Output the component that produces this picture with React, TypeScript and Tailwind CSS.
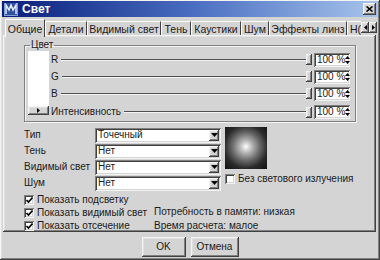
import { ReactNode } from 'react';

const raised =
  'shadow-[inset_-1px_-1px_#404040,inset_1px_1px_#f4f4f4,inset_-2px_-2px_#808080,inset_2px_2px_#e0e0e0]';
const sunken =
  'shadow-[inset_1px_1px_#808080,inset_-1px_-1px_#f4f4f4,inset_2px_2px_#404040,inset_-2px_-2px_#d4d4d4]';

const DownArrow = () => (
  <svg width="7" height="4" viewBox="0 0 7 4" className="shrink-0">
    <path d="M0 0h7L3.5 4z" fill="#000" />
  </svg>
);

const Combo = ({ value }: { value: string }) => (
  <div className={`flex h-[15px] w-[126px] items-center bg-white pl-[3px] pr-[2px] ${sunken}`}>
    <span className="flex-1 leading-none">{value}</span>
    <div className={`flex h-[11px] w-[10px] shrink-0 items-center justify-center bg-[#d4d4d4] ${raised}`}>
      <DownArrow />
    </div>
  </div>
);

const Spin = () => (
  <div className={`flex h-[14px] w-[36px] shrink-0 items-center bg-white pl-[3px] pr-[2px] ${sunken}`}>
    <span className="flex-1 leading-none">100 %</span>
    <svg width="5" height="10" viewBox="0 0 5 10" className="shrink-0">
      <path d="M0 4L2.5 1L5 4z M0 6h5L2.5 9z" fill="#000" />
    </svg>
  </div>
);

const SliderRow = ({ label, tall }: { label: string; tall?: boolean }) => (
  <div className={`flex items-center ${tall ? 'mt-[1px] h-[18px]' : 'h-[17px]'}`}>
    <span className="leading-none">{label}</span>
    <div className="ml-[3px] h-[2px] flex-1 border-t border-b border-t-[#505050] border-b-[#f4f4f4]" />
    <div className={`h-[11px] w-[6px] shrink-0 bg-[#d4d4d4] ${raised}`} />
    <div className="ml-[2px] mr-[2px]">
      <Spin />
    </div>
  </div>
);

const Check = ({ checked, children }: { checked: boolean; children: ReactNode }) => (
  <div className="flex h-[10px] items-center gap-[3px]">
    <div className={`flex h-[10px] w-[10px] shrink-0 items-center justify-center bg-white ${sunken}`}>
      {checked && (
        <svg width="7" height="7" viewBox="0 0 7 7">
          <path d="M0.5 3l2 2 4-4.5" stroke="#000" strokeWidth="1.6" fill="none" />
        </svg>
      )}
    </div>
    <span className="leading-none">{children}</span>
  </div>
);

const tabs = [
  { name: 'Детали', w: 'w-[42px]' },
  { name: 'Видимый свет', w: 'w-[74px]' },
  { name: 'Тень', w: 'w-[30px]' },
  { name: 'Каустики', w: 'w-[50px]' },
  { name: 'Шум', w: 'w-[28px]' },
  { name: 'Эффекты линз', w: 'w-[78px]' },
];

export default function App() {
  return (
    <div
      className={`flex h-[260px] w-[380px] flex-col overflow-hidden whitespace-nowrap bg-[#d4d4d4] px-[2px] pt-[1px] text-[10px] text-[#1a1a1a] ${raised}`}
      style={{ fontFamily: '"Liberation Sans", Arial, sans-serif' }}
    >
      {/* title bar */}
      <div className="flex h-[16px] shrink-0 items-center bg-gradient-to-r from-[#0c1c7a] via-[#4a6cc0] to-[#a8c4ea] px-[2px]">
        <div className="flex h-[13px] w-[14px] items-center justify-center bg-[#7fa0d0]">
          <svg width="12" height="12" viewBox="0 0 12 12">
            <rect x="0" y="0" width="12" height="12" fill="#3050a0" />
            <path d="M1 11V2l3 5 2-5 2 5 3-5v9" stroke="#e0e8ff" strokeWidth="1.5" fill="none" />
          </svg>
        </div>
        <span className="ml-[4px] flex-1 text-[12px] font-bold leading-none text-white">Свет</span>
        <div className={`flex h-[12px] w-[13px] items-center justify-center bg-[#d4d4d4] ${raised}`}>
          <svg width="7" height="6" viewBox="0 0 7 6">
            <path d="M0.5 0.5l6 5M6.5 0.5l-6 5" stroke="#000" strokeWidth="1.6" />
          </svg>
        </div>
      </div>

      {/* tabs */}
      <div className="flex h-[18px] shrink-0 items-end pl-[3px] pr-[1px] text-[10.5px]">
        <div className="relative z-10 mb-[-2px] flex h-[18px] w-[40px] shrink-0 items-start justify-center border-l border-t border-r border-white border-r-[#404040] bg-[#d4d4d4] pt-[4px] leading-none">
          Общие
        </div>
        {tabs.map((t) => (
          <div
            key={t.name}
            className={`flex h-[14px] shrink-0 ${t.w} items-center justify-center border-l border-t border-r border-white border-r-[#404040] pt-[1px] leading-none`}
          >
            {t.name}
          </div>
        ))}
        <div className="flex h-[14px] w-[14px] shrink-0 items-center overflow-hidden border-l border-t border-white pl-[2px] pt-[1px] leading-none">
          Н(
        </div>
        <div className="mb-[2px] flex">
          <div className={`flex h-[11px] w-[8px] items-center justify-center bg-[#d4d4d4] ${raised}`}>
            <svg width="3" height="5" viewBox="0 0 3 5"><path d="M3 0v5L0 2.5z" fill="#000" /></svg>
          </div>
          <div className={`flex h-[11px] w-[8px] items-center justify-center bg-[#d4d4d4] ${raised}`}>
            <svg width="3" height="5" viewBox="0 0 3 5"><path d="M0 0v5l3-2.5z" fill="#000" /></svg>
          </div>
        </div>
      </div>

      {/* panel */}
      <div className={`ml-[1px] mr-[2px] flex h-[197px] shrink-0 flex-col overflow-hidden pl-[21px] pr-[20px] pt-[5px] ${raised}`}>
        <fieldset className="h-[82px] border border-[#808080] px-[3px] shadow-[1px_1px_#f4f4f4,inset_1px_1px_#f4f4f4]">
          <legend className="ml-[2px] px-[1px] leading-none">Цвет</legend>
          <div className="mt-[1px] flex">
            <div className="flex w-[21px] flex-col">
              <div className="h-[55px] bg-white" />
              <div className={`flex h-[9px] items-center justify-center bg-[#d4d4d4] ${raised}`}>
                <svg width="3" height="5" viewBox="0 0 3 5"><path d="M0 0v5l3-2.5z" fill="#000" /></svg>
              </div>
            </div>
            <div className="ml-[2px] flex flex-1 flex-col">
              <SliderRow label="R" />
              <SliderRow label="G" />
              <SliderRow label="B" />
              <SliderRow label="Интенсивность" tall />
            </div>
          </div>
        </fieldset>

        <div className="mt-[5px] flex">
          <div className="flex flex-col">
            {[
              ['Тип', 'Точечный'],
              ['Тень', 'Нет'],
              ['Видимый свет', 'Нет'],
              ['Шум', 'Нет'],
            ].map(([l, v]) => (
              <div key={l} className="flex h-[16px] items-center">
                <span className="w-[71px] leading-none">{l}</span>
                <Combo value={v} />
              </div>
            ))}
          </div>
          <div className="ml-[4px] flex flex-col">
            <div className="h-[42px] w-[42px] bg-[radial-gradient(circle_at_50%_47%,#ffffff_0%,#b0b0b0_22%,#6a6a6a_45%,#2a2a2a_70%,#111_100%)]" />
            <div className="mt-[5px]">
              <Check checked={false}>Без светового излучения</Check>
            </div>
          </div>
        </div>

        <div className="mt-[4px] flex">
          <div className="flex w-[130px] flex-col gap-[3px]">
            <Check checked>Показать подсветку</Check>
            <Check checked>Показать видимый свет</Check>
            <Check checked>Показать отсечение</Check>
          </div>
          <div className="flex flex-col gap-[4px] pt-[12px] leading-none">
            <span>Потребность в памяти: низкая</span>
            <span>Время расчета: малое</span>
          </div>
        </div>
      </div>

      {/* buttons */}
      <div className="mt-[5px] flex justify-center gap-[5px]">
        <div className={`flex h-[20px] w-[44px] items-center justify-center leading-none ${raised}`}>OK</div>
        <div className={`flex h-[20px] w-[48px] items-center justify-center leading-none ${raised}`}>Отмена</div>
      </div>
    </div>
  );
}
